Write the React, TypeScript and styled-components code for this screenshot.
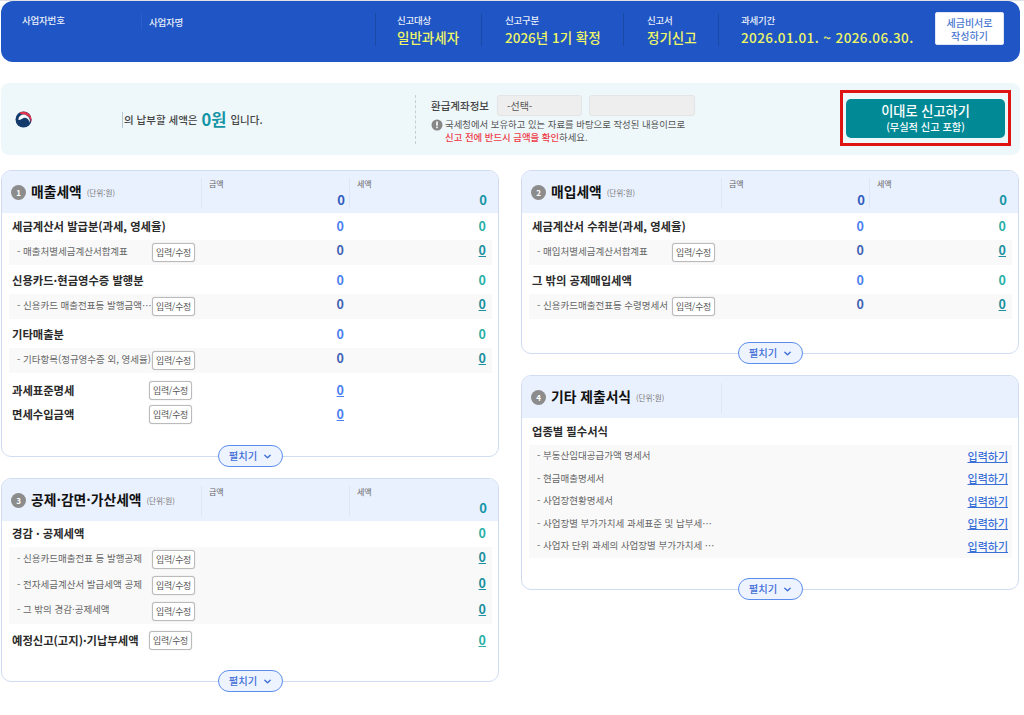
import React from 'react';
import styled, { createGlobalStyle } from 'styled-components';

const Global = createGlobalStyle`
  html, body { margin: 0; padding: 0; background: #fff; }
  body { font-family: "Noto Sans CJK KR", "Noto Sans", sans-serif; color: #222; }
  * { box-sizing: border-box; }
`;

const Page = styled.div`
  width: 1024px;
  height: 715px;
  overflow: hidden;
  border-top: 1px solid #dfe1e6;
  padding: 0 4px 0 1px;
`;

const TopBar = styled.header`
  display: flex;
  align-items: flex-start;
  height: 61px;
  padding-top: 12px;
  background: #1f55c4;
  border-radius: 12px;
`;

const InfoCell = styled.div<{ $w: number; $pl: number; $short?: boolean }>`
  width: ${p => p.$w}px;
  height: ${p => (p.$short ? 17 : 33)}px;
  padding-left: ${p => p.$pl}px;
  flex: none;
  display: flex;
  flex-direction: column;
  border-left: 1px solid ${p => (p.$short ? '#2a5fc9' : '#1a4aa6')};
  &:first-child { border-left: 0; }
`;

const InfoLabel = styled.span<{ $low?: boolean }>`
  font-size: 9.5px;
  line-height: 14px;
  font-weight: 500;
  color: #e9effb;
  letter-spacing: -0.2px;
  margin-top: ${p => (p.$low ? 2 : 0)}px;
`;

const InfoValue = styled.span<{ $wide?: boolean }>`
  font-size: 13.5px;
  line-height: 20px;
  font-weight: 500;
  color: #eef567;
  white-space: nowrap;
  letter-spacing: ${p => (p.$wide ? 0.4 : 0)}px;
`;

const HelperButton = styled.button`
  width: 69px;
  height: 33px;
  margin: -1px 0 0 -4px;
  padding: 0;
  border: 1px solid #dfe6f5;
  border-radius: 2px;
  background: #fff;
  color: #4b78cf;
  font: 500 10px/13px "Noto Sans CJK KR", sans-serif;
`;

const Notice = styled.section`
  display: flex;
  align-items: center;
  height: 72px;
  margin-top: 21px;
  background: #eef7fa;
  border-radius: 8px;
`;

const Summary = styled.div`
  width: 414px;
  flex: none;
  display: flex;
  align-items: center;
  padding-left: 14px;
`;

const NameSlot = styled.div`
  margin: 1px 0 0 90px;
  height: 16px;
  border-left: 1px solid #b9c8cf;
  padding-left: 1px;
  display: flex;
  align-items: center;
  font-size: 10.5px;
  font-weight: 500;
  color: #444;
  white-space: nowrap;
`;

const ZeroWon = styled.strong`
  font-size: 16.5px;
  font-weight: 700;
  color: #1495a5;
  margin: 0 4px;
  position: relative;
  top: -1px;
`;

const Refund = styled.div`
  width: 420px;
  height: 49px;
  flex: none;
  padding-left: 15px;
  border-left: 1px dashed #c6ced2;
`;

const RefundRow = styled.div`
  display: flex;
  align-items: center;
  gap: 8px;
  height: 22px;
  font-size: 10.5px;
  font-weight: 500;
  color: #444;
  &>div+div { margin-left: -1px; }
`;

const FieldBox = styled.div<{ $w: number }>`
  width: ${p => p.$w}px;
  height: 21px;
  padding-left: 9px;
  background: #eeeeee;
  border: 1px solid #e4e4e4;
  border-radius: 3px;
  font-size: 10px;
  line-height: 19px;
  font-weight: 400;
  color: #555;
`;

const NoticeText = styled.div`
  display: flex;
  gap: 2px;
  margin-top: 1px;
  font-size: 9.4px;
  line-height: 13px;
  color: #555;
  white-space: nowrap;
`;

const Warn = styled.b`
  color: #ef3b46;
  font-weight: 500;
`;

const CtaFrame = styled.div`
  margin: -2px 0 0 5px;
  width: 171px;
  height: 56px;
  padding: 6px 3px 5px 3px;
  border: 3px solid #e01313;
  flex: none;
`;

const Cta = styled.button`
  display: block;
  width: 159px;
  height: 39px;
  margin: 0 auto;
  padding: 0 0 1px;
  border: 0;
  border-radius: 5px;
  background: #018a96;
  color: #fff;
  font-family: inherit;
  line-height: 14px;
  font-size: 13.2px;
  font-weight: 500;
  span { display: block; font-size: 10.2px; font-weight: 500; line-height: 13px; margin-top: 2px; }
`;

const Columns = styled.main`
  display: flex;
  gap: 22px;
  margin-top: 15px;
`;

const Column = styled.div`
  width: 498px;
  display: flex;
  flex-direction: column;
  gap: 21px;
`;

const Card = styled.section<{ $h: number }>`
  position: relative;
  height: ${p => p.$h}px;
  border: 1px solid #cfdcf2;
  border-radius: 10px;
  background: #fff;
`;

const CardHead = styled.div`
  display: flex;
  height: 42px;
  background: #eaf1fe;
  border-radius: 9px 9px 0 0;
`;

const CardTitle = styled.div`
  width: 199px;
  flex: none;
  display: flex;
  align-items: center;
  padding: 0 0 0 9px;
  white-space: nowrap;
`;

const Badge = styled.i`
  width: 15px;
  height: 15px;
  margin-right: 5px;
  border-radius: 50%;
  background: #8c8c8c;
  color: #fff;
  font: 700 8px/15px "Noto Sans CJK KR", sans-serif;
  text-align: center;
`;

const TitleText = styled.h2`
  margin: -2px 0 0;
  font-size: 13.8px;
  line-height: 20px;
  font-weight: 700;
  color: #111;
`;

const Unit = styled.small`
  margin-left: 5px;
  font-size: 7.6px;
  color: #777;
`;

const HeadCell = styled.div<{ $w: number; $pr: number }>`
  width: ${p => p.$w}px;
  height: 30px;
  margin-top: 7px;
  padding: 0 ${p => p.$pr}px 0 7px;
  border-left: 1px solid #dde6f6;
  display: flex;
  flex-direction: column;
  flex: none;
`;

const HeadLabel = styled.span`
  font-size: 8px;
  line-height: 12px;
  color: #666;
`;

const HeadValue = styled.b<{ $tone: 'blue' | 'teal' }>`
  align-self: flex-end;
  margin-top: 1px;
  font-size: 13px;
  line-height: 17px;
  font-weight: 700;
  color: ${p => (p.$tone === 'blue' ? '#2f5dbd' : '#1495a5')};
`;

const Body = styled.div`
  padding: 0 6px 0 7px;
`;

const Row = styled.div<{ $h: number; $sub?: boolean }>`
  display: grid;
  grid-template-columns: ${p => (p.$sub ? '135px 43px 149px 142px' : '137px 43px 152px 142px')};
  align-items: ${p => (p.$sub ? 'center' : 'end')};
  height: ${p => p.$h}px;
  padding: ${p => (p.$sub ? '0 6px 0 8px' : '0 6px 6px 3px')};
  background: ${p => (p.$sub ? '#f9f9f9' : 'transparent')};
`;

const CenterRow = styled(Row)`
  align-items: center;
  padding-bottom: 0;
`;

const Spacer = styled.div<{ $h: number }>`
  height: ${p => p.$h}px;
`;

const RowTitle = styled.div`
  font-size: 11.3px;
  line-height: 16px;
  font-weight: 700;
  color: #2a2a2a;
  white-space: nowrap;
`;

const RowSub = styled.div`
  margin-top: -4px;
  font-size: 9.5px;
  line-height: 14px;
  color: #666;
  white-space: nowrap;
`;

const FormSub = styled(RowSub)`
  margin-top: -2px;
`;

const Edit = styled.button`
  grid-column: 2;
  width: 43px;
  height: 19px;
  padding: 0;
  border: 1px solid #bbb;
  border-radius: 3px;
  background: #fff;
  box-shadow: 0 0 1px #bbb;
  color: #555;
  font: 400 8.9px/17px "Noto Sans CJK KR", sans-serif;
  letter-spacing: -0.2px;
`;

const tones = {
  blue: '#4a80f0',
  teal: '#2bb0a8',
  subBlue: '#3f62b5',
  subTeal: '#1c8fa0',
};

const Amount = styled.span<{ $tone: keyof typeof tones; $col: number; $link?: boolean; $up?: boolean }>`
  grid-column: ${p => p.$col};
  justify-self: end;
  margin-top: ${p => (p.$up ? -5 : 0)}px;
  font-size: 12.5px;
  line-height: 16px;
  font-weight: 700;
  color: ${p => tones[p.$tone]};
  text-decoration: ${p => (p.$link ? 'underline' : 'none')};
  text-underline-offset: 1px;
`;

const FormRow = styled.div`
  display: flex;
  align-items: center;
  justify-content: space-between;
  height: 22.5px;
  padding: 0 4px 0 8px;
  background: #f9f9f9;
`;

const FormLink = styled.a`
  font-size: 11px;
  font-weight: 500;
  line-height: 15px;
  color: #3a6fd8;
  text-decoration: underline;
  text-underline-offset: 1px;
`;

const Expand = styled.button`
  position: absolute;
  left: 216px;
  bottom: -11px;
  width: 65px;
  height: 22px;
  padding: 0;
  display: flex;
  align-items: center;
  justify-content: center;
  gap: 6px;
  border: 1px solid #5b8def;
  border-radius: 11px;
  background: #eef4ff;
  color: #3f6fd6;
  font: 500 10.3px/14px "Noto Sans CJK KR", sans-serif;
`;

const Emblem = () => (
  <svg width="17" height="17" viewBox="0 0 34 34" aria-label="emblem">
    <circle cx="17" cy="17" r="16" fill="#123a6b" />
    <path d="M9 3.2C18-1 33 3 33 18c0 2-.4 4-1.2 5.5C32 14 24 5.5 14 6.5 12 6.7 10 5 9 3.2z" fill="#e0334d" />
    <path d="M6.5 17C8 8 17 4.8 23 9c6 4 8 9 6 14.5-.6-5-3.5-9.5-9-10-2-.2-3.8 1-5.5 2.2C11 18 8 18.5 6.5 17z" fill="#f5fafc" />
  </svg>
);

const Chevron = () => (
  <svg width="9" height="9" viewBox="0 0 10 10" fill="none" stroke="#3f6fd6" strokeWidth="1.5" strokeLinecap="round" strokeLinejoin="round">
    <path d="M2 3.5 5 6.5 8 3.5" />
  </svg>
);

const Info = () => (
  <svg width="12" height="12" viewBox="0 0 12 12" style={{ flex: 'none', marginTop: 1 }}>
    <circle cx="6" cy="6" r="5.5" fill="#868686" />
    <rect x="5.2" y="2.5" width="1.6" height="4.2" fill="#fff" />
    <rect x="5.2" y="7.6" width="1.6" height="1.6" fill="#fff" />
  </svg>
);

type HeadProps = { n: number; title: string; cols?: boolean; amount?: boolean };

const Head = ({ n, title, cols = true, amount = true }: HeadProps) => (
  <CardHead>
    <CardTitle>
      <Badge>{n}</Badge>
      <TitleText>{title}</TitleText>
      <Unit>(단위:원)</Unit>
    </CardTitle>
    <HeadCell $w={148} $pr={4}>
      {cols && <HeadLabel>금액</HeadLabel>}
      {cols && amount && <HeadValue $tone="blue">0</HeadValue>}
    </HeadCell>
    {cols && (
      <HeadCell $w={142} $pr={4}>
        <HeadLabel>세액</HeadLabel>
        <HeadValue $tone="teal">0</HeadValue>
      </HeadCell>
    )}
  </CardHead>
);

type TitleProps = { text: string; h?: number; amount?: boolean; tax?: boolean };

const Title = ({ text, h = 29, amount = true, tax = true }: TitleProps) => (
  <Row $h={h}>
    <RowTitle>{text}</RowTitle>
    {amount && <Amount $tone="blue" $col={3}>0</Amount>}
    {tax && <Amount $tone="teal" $col={4}>0</Amount>}
  </Row>
);

const Sub = ({ text, h = 25, amount = true }: { text: string; h?: number; amount?: boolean }) => (
  <Row $h={h} $sub>
    <RowSub>- {text}</RowSub>
    <Edit>입력/수정</Edit>
    {amount && <Amount $tone="subBlue" $col={3} $up>0</Amount>}
    <Amount $tone="subTeal" $col={4} $link $up>0</Amount>
  </Row>
);

const Single = ({ text, h, col, tone }: { text: string; h: number; col: number; tone: keyof typeof tones }) => (
  <CenterRow $h={h}>
    <RowTitle>{text}</RowTitle>
    <Edit>입력/수정</Edit>
    <Amount $tone={tone} $col={col} $link>0</Amount>
  </CenterRow>
);

const More = () => (
  <Expand>
    펼치기 <Chevron />
  </Expand>
);

const cells = [
  { w: 140, pl: 21, label: '사업자번호' },
  { w: 234, pl: 7, label: '사업자명', short: true },
  { w: 106, pl: 21, label: '신고대상', value: '일반과세자' },
  { w: 142, pl: 23, label: '신고구분', value: '2026년 1기 확정' },
  { w: 95, pl: 23, label: '신고서', value: '정기신고' },
  { w: 221, pl: 22, label: '과세기간', value: '2026.01.01. ~ 2026.06.30.', wide: true },
];

const forms = [
  '부동산임대공급가액 명세서',
  '현금매출명세서',
  '사업장현황명세서',
  '사업장별 부가가치세 과세표준 및 납부세⋯',
  '사업자 단위 과세의 사업장별 부가가치세 ⋯',
];

export default function App() {
  return (
    <Page lang="ko">
      <Global />
      <TopBar>
        {cells.map(c => (
          <InfoCell key={c.label} $w={c.w} $pl={c.pl} $short={c.short}>
            <InfoLabel $low={c.short}>{c.label}</InfoLabel>
            {c.value && <InfoValue $wide={c.wide}>{c.value}</InfoValue>}
          </InfoCell>
        ))}
        <HelperButton>세금비서로<br />작성하기</HelperButton>
      </TopBar>

      <Notice>
        <Summary>
          <Emblem />
          <NameSlot>
            의 납부할 세액은 <ZeroWon>0원</ZeroWon> 입니다.
          </NameSlot>
        </Summary>
        <Refund>
          <RefundRow>
            환급계좌정보
            <FieldBox $w={85}>-선택-</FieldBox>
            <FieldBox $w={106} />
          </RefundRow>
          <NoticeText>
            <Info />
            <div>
              국세청에서 보유하고 있는 자료를 바탕으로 작성된 내용이므로<br />
              <Warn>신고 전에 반드시 금액을 확인</Warn>하세요.
            </div>
          </NoticeText>
        </Refund>
        <CtaFrame>
          <Cta>
            이대로 신고하기
            <span>(무실적 신고 포함)</span>
          </Cta>
        </CtaFrame>
      </Notice>

      <Columns>
        <Column>
          <Card $h={287}>
            <Head n={1} title="매출세액" />
            <Body>
              <Title text="세금계산서 발급분(과세, 영세율)" h={27} />
              <Sub text="매출처별세금계산서합계표" />
              <Title text="신용카드·현금영수증 발행분" />
              <Sub text="신용카드 매출전표등 발행금액⋯" />
              <Title text="기타매출분" />
              <Sub text="기타항목(정규영수증 외, 영세율)" />
              <Spacer $h={5} />
              <Single text="과세표준명세" h={24} col={3} tone="blue" />
              <Single text="면세수입금액" h={24} col={3} tone="blue" />
            </Body>
            <More />
          </Card>
          <Card $h={204}>
            <Head n={3} title="공제·감면·가산세액" amount={false} />
            <Body>
              <Title text="경감 · 공제세액" h={26} amount={false} />
              <Sub text="신용카드매출전표 등 발행공제" h={25.7} amount={false} />
              <Sub text="전자세금계산서 발급세액 공제" h={25.7} amount={false} />
              <Sub text="그 밖의 경감·공제세액" h={25.7} amount={false} />
              <Spacer $h={3} />
              <Single text="예정신고(고지)·기납부세액" h={26} col={4} tone="teal" />
            </Body>
            <More />
          </Card>
        </Column>
        <Column>
          <Card $h={184}>
            <Head n={2} title="매입세액" />
            <Body>
              <Title text="세금계산서 수취분(과세, 영세율)" h={27} />
              <Sub text="매입처별세금계산서합계표" />
              <Title text="그 밖의 공제매입세액" />
              <Sub text="신용카드매출전표등 수령명세서" />
            </Body>
            <More />
          </Card>
          <Card $h={215}>
            <Head n={4} title="기타 제출서식" cols={false} />
            <Body>
              <Title text="업종별 필수서식" h={27} amount={false} tax={false} />
              {forms.map(f => (
                <FormRow key={f}>
                  <FormSub>- {f}</FormSub>
                  <FormLink>입력하기</FormLink>
                </FormRow>
              ))}
            </Body>
            <More />
          </Card>
        </Column>
      </Columns>
    </Page>
  );
}
